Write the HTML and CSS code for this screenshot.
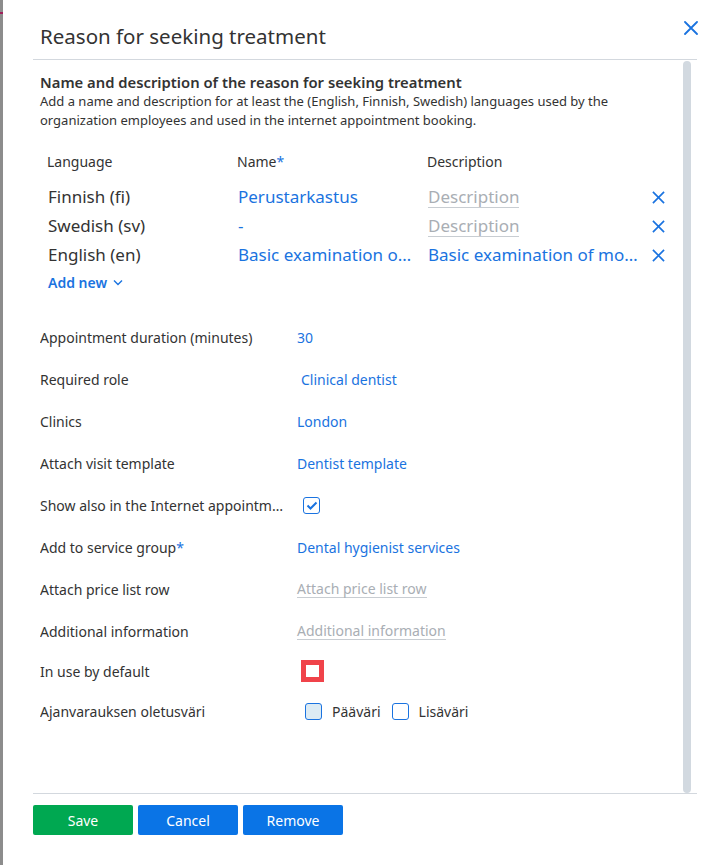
FILE: index.html
```html
<!DOCTYPE html>
<html lang="en">
<head>
    <meta charset="UTF-8">
    <meta name="viewport" content="width=device-width, initial-scale=1.0">
    <title>Reason for seeking treatment</title>
    <link rel="stylesheet" href="styles.css">
</head>
<body>
    <div class="backdrop"><span class="mark"></span></div>

    <div class="dialog">
        <div class="dialog-header">
            <h2>Reason for seeking treatment</h2>
            <button class="close-btn" aria-label="Close">
                <svg width="14" height="14" viewBox="0 0 14 14"><path d="M1 1L13 13M13 1L1 13" stroke="#1a73e0" stroke-width="1.8" stroke-linecap="round"/></svg>
            </button>
        </div>

        <div class="dialog-body">
            <div class="dialog-content">
                <div class="section">
                    <h3>Name and description of the reason for seeking treatment</h3>
                    <p>Add a name and description for at least the (English, Finnish, Swedish) languages used by the organization employees and used in the internet appointment booking.</p>
                </div>

                <div class="lang-table">
                    <div class="lang-head">Language</div>
                    <div class="lang-head">Name<span class="req">*</span></div>
                    <div class="lang-head">Description</div>
                    <div></div>

                    <div class="lang-cell">Finnish (fi)</div>
                    <div class="lang-cell value">Perustarkastus</div>
                    <div class="lang-cell"><span class="placeholder">Description</span></div>
                    <div class="lang-cell remove"><svg width="13" height="13" viewBox="0 0 14 14"><path d="M1 1L13 13M13 1L1 13" stroke="#1a73e0" stroke-width="1.8"/></svg></div>

                    <div class="lang-cell">Swedish (sv)</div>
                    <div class="lang-cell value">-</div>
                    <div class="lang-cell"><span class="placeholder">Description</span></div>
                    <div class="lang-cell remove"><svg width="13" height="13" viewBox="0 0 14 14"><path d="M1 1L13 13M13 1L1 13" stroke="#1a73e0" stroke-width="1.8"/></svg></div>

                    <div class="lang-cell">English (en)</div>
                    <div class="lang-cell value">Basic examination of the mouth</div>
                    <div class="lang-cell value">Basic examination of mouth and teeth</div>
                    <div class="lang-cell remove"><svg width="13" height="13" viewBox="0 0 14 14"><path d="M1 1L13 13M13 1L1 13" stroke="#1a73e0" stroke-width="1.8"/></svg></div>
                </div>

                <div class="add-new">
                    Add new
                    <svg width="10" height="7" viewBox="0 0 10 7"><path d="M1 1.5L5 5.5L9 1.5" fill="none" stroke="#1a73e0" stroke-width="1.4"/></svg>
                </div>

                <div class="form">
                    <div class="form-row">
                        <div class="label">Appointment duration (minutes)</div>
                        <div class="value">30</div>
                    </div>
                    <div class="form-row">
                        <div class="label">Required role</div>
                        <div class="value indent">Clinical dentist</div>
                    </div>
                    <div class="form-row">
                        <div class="label">Clinics</div>
                        <div class="value">London</div>
                    </div>
                    <div class="form-row">
                        <div class="label">Attach visit template</div>
                        <div class="value">Dentist template</div>
                    </div>
                    <div class="form-row">
                        <div class="label">Show also in the Internet appointment booking</div>
                        <div class="value"><span class="check checked"><svg width="12" height="9" viewBox="0 0 12 9"><path d="M1.5 4.5L4.5 7.5L10.5 1.5" fill="none" stroke="#1a73e0" stroke-width="2"/></svg></span></div>
                    </div>
                    <div class="form-row">
                        <div class="label">Add to service group<span class="req">*</span></div>
                        <div class="value">Dental hygienist services</div>
                    </div>
                    <div class="form-row">
                        <div class="label">Attach price list row</div>
                        <div class="value"><span class="placeholder">Attach price list row</span></div>
                    </div>
                    <div class="form-row">
                        <div class="label">Additional information</div>
                        <div class="value"><span class="placeholder">Additional information</span></div>
                    </div>
                    <div class="form-row short">
                        <div class="label">In use by default</div>
                        <div class="value"><span class="check error"></span></div>
                    </div>
                    <div class="form-row">
                        <div class="label">Ajanvarauksen oletusväri</div>
                        <div class="value colors">
                            <span class="check primary"></span><span class="color-name">Pääväri</span>
                            <span class="check"></span><span class="color-name">Lisäväri</span>
                        </div>
                    </div>
                </div>
            </div>
            <div class="scrollbar"></div>
        </div>

        <div class="dialog-footer">
            <button class="btn btn-save">Save</button>
            <button class="btn">Cancel</button>
            <button class="btn">Remove</button>
        </div>
    </div>
</body>
</html>
```

FILE: styles.css
```css
* {
    margin: 0;
    padding: 0;
    box-sizing: border-box;
}

body {
    font-family: "Noto Sans", "Open Sans", sans-serif;
    color: #333;
    background: white;
    height: 100vh;
    display: flex;
    overflow: hidden;
}

.backdrop {
    width: 3px;
    background: #8c8c8c;
    position: relative;
}

.backdrop .mark {
    position: absolute;
    top: 12px;
    left: 0;
    width: 3px;
    height: 2px;
    background: #a0205a;
}

.dialog {
    flex: 1;
    background: white;
    padding: 0 28px 0 30px;
    display: flex;
    flex-direction: column;
}

.dialog-header {
    height: 60px;
    border-bottom: 1px solid #d3d8de;
    display: flex;
    justify-content: space-between;
    align-items: center;
    padding-left: 7px;
}

.dialog-header h2 {
    font-size: 20.5px;
    font-weight: normal;
    color: #333;
    margin-top: 12px;
}

.close-btn {
    background: none;
    border: none;
    cursor: pointer;
    margin-top: -3px;
    margin-right: -1px;
    display: flex;
}

.dialog-body {
    height: 734px;
    border-bottom: 1px solid #d3d8de;
    display: flex;
}

.dialog-content {
    flex: 1;
    padding: 12px 0 0 7px;
}

.scrollbar {
    width: 8px;
    margin: 1px 6px 0 0;
    background: #d2d9e0;
    border-radius: 4px;
}

.section h3 {
    font-size: 14.8px;
    font-weight: 600;
    color: #333;
    line-height: 20px;
}

.section p {
    font-size: 13px;
    line-height: 19px;
    color: #333;
    max-width: 600px;
}

.lang-table {
    display: grid;
    grid-template-columns: 190px 190px 225px 30px;
    margin: 21px 0 0 7px;
}

.lang-head {
    font-size: 14px;
    height: 32px;
    line-height: 22px;
}

.lang-cell {
    font-size: 17px;
    height: 29px;
    line-height: 27px;
    white-space: nowrap;
    overflow: hidden;
    text-overflow: ellipsis;
    padding-left: 1px;
    padding-right: 10px;
}

.lang-cell.remove {
    display: flex;
    align-items: center;
    justify-content: flex-start;
    padding-left: 0;
    overflow: visible;
}

.value {
    color: #1a73e0;
}

.req {
    color: #1a73e0;
}

.placeholder {
    color: #a9aeb4;
    border-bottom: 1px solid #c8cdd2;
    display: inline-block;
    line-height: 1.25;
}

.add-new {
    color: #1a73e0;
    font-size: 14px;
    font-weight: 600;
    margin: 3px 0 0 8px;
    display: flex;
    align-items: center;
    gap: 6px;
}

.form {
    margin-top: 24px;
}

.form-row {
    display: flex;
    align-items: center;
    height: 42px;
    font-size: 14px;
}

.form-row.short {
    height: 38px;
}

.form-row .label {
    width: 257px;
    white-space: nowrap;
    overflow: hidden;
    text-overflow: ellipsis;
    padding-right: 10px;
}

.form-row .value {
    display: flex;
    align-items: center;
}

.form-row .value.indent {
    padding-left: 4px;
}

.check {
    width: 17px;
    height: 17px;
    border: 1.5px solid #1a73e0;
    border-radius: 3px;
    background: white;
    display: inline-flex;
    align-items: center;
    justify-content: center;
    margin-left: 6px;
}

.check.error {
    width: 23px;
    height: 22px;
    border: 5px solid #f0434a;
    border-radius: 0;
    margin-left: 4px;
}

.check.primary {
    background: #dcebf4;
    margin-left: 8px;
}

.colors .check {
    width: 17px;
    height: 17px;
}

.colors .check:not(.primary) {
    margin-left: 11px;
}

.color-name {
    color: #333;
    margin-left: 10px;
}

.dialog-footer {
    padding-top: 11px;
    display: flex;
    gap: 5px;
}

.btn {
    width: 100px;
    height: 30px;
    border: none;
    border-radius: 2px;
    background: #0a74e6;
    color: white;
    font-family: inherit;
    font-size: 14px;
    cursor: pointer;
}

.btn-save {
    background: #00a851;
}
```
